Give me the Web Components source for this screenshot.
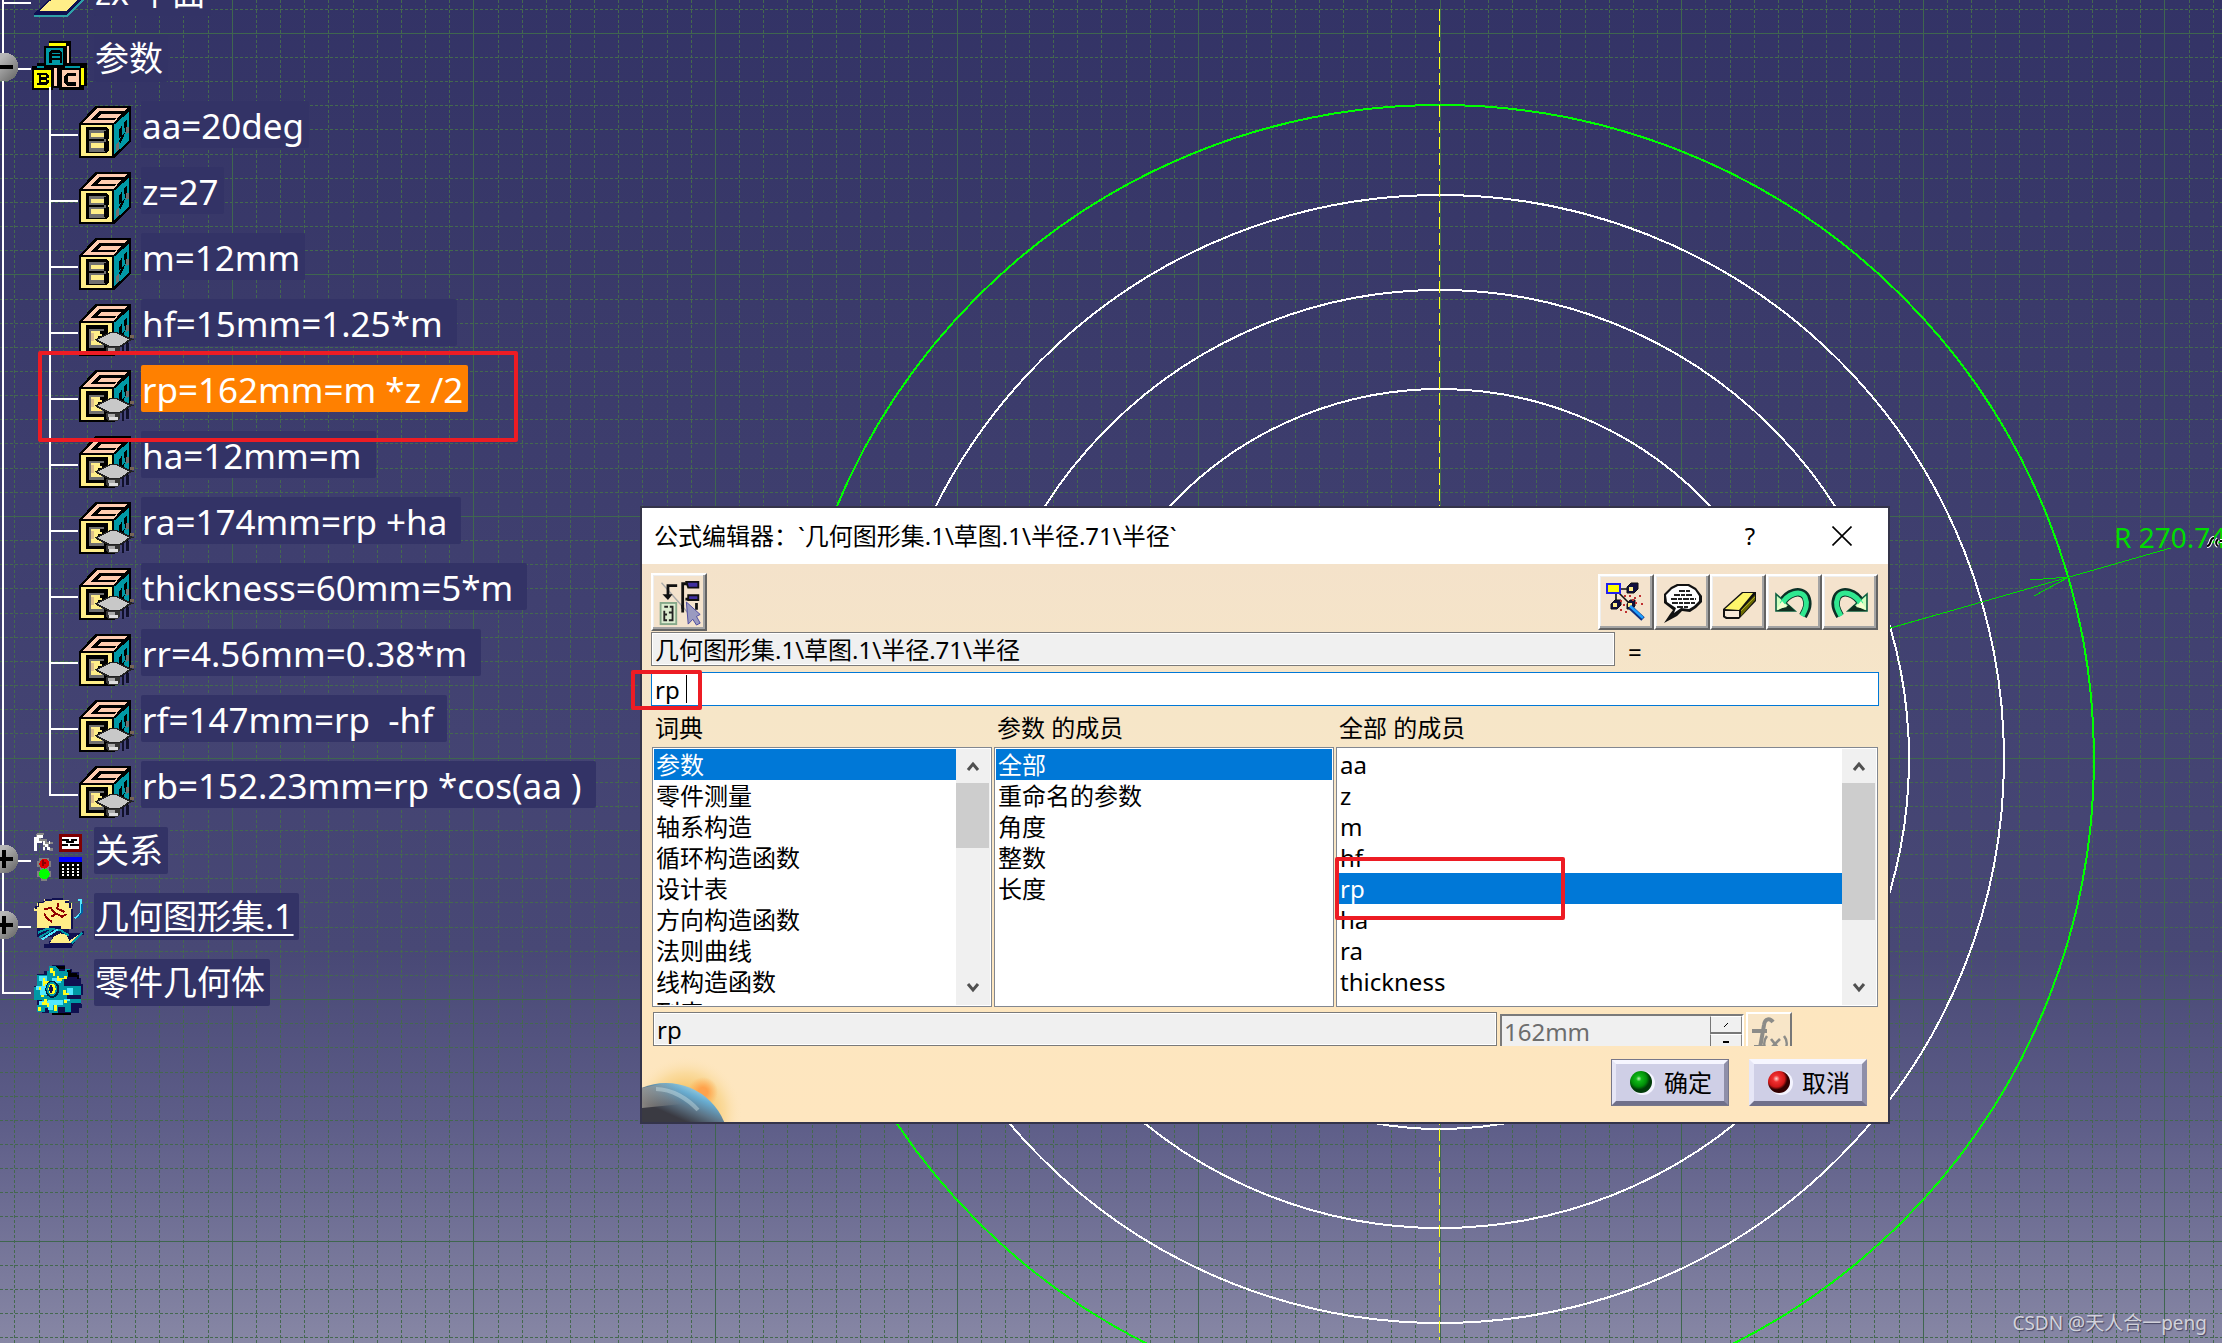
<!DOCTYPE html>
<html lang="zh-CN">
<head>
<meta charset="utf-8">
<title>公式编辑器</title>
<style>
html,body{margin:0;height:100%}
body{font-family:"Noto Sans","Noto Sans CJK SC",sans-serif;overflow:hidden}
</style>
</head>
<body>
<cad-workspace></cad-workspace>
<script>
const K='shape-rendering="crispEdges"';
const cubeShell=`
<path d="M0 52 50 0H156V106L106 156H0Z" fill="#000"/>
<path d="M12 50 54 6H144L104 50Z" fill="#ffccb0"/>
<path d="M34 43 62 15H136L128 24H70L60 36H112L104 43Z" fill="#000"/>
<path d="M66 24H124L112 36H56Z" fill="#ffccb0"/>
<path d="M106 56 149 18V106L106 144Z" fill="#0099a6"/>
<path d="M120 70 130 58V88L120 98ZM136 48 144 40V78H138V62L136 66Z" fill="#000"/>
<path d="M112 116 120 108V130L112 136ZM140 62H149V80L140 86Z" fill="#707070"/>
<path d="M120 104 132 84 138 82 124 112Z" fill="#000"/>
<path d="M6 58H98V149H6Z" fill="#ffee88"/>`;
const ICONS={
cube:`<svg viewBox="0 0 156 156" width="52" height="52" ${K}>${cubeShell}
<path d="M20 64H84L91 72V98L86 103 91 108V134L84 141H20Z" fill="#000"/>
<path d="M30 73H82V132L76 138H30Z" fill="#707070"/>
<path d="M30 99H76V105H30ZM75 74H80V98H75ZM75 108H80V134H75Z" fill="#000"/>
<path d="M36 80H74V94H36ZM36 110H74V126H36Z" fill="#ffee88"/></svg>`,
formula:`<svg viewBox="0 0 156 156" width="52" height="52" ${K} style="overflow:visible">${cubeShell}
<path d="M20 64H88V74H82V140H20Z" fill="#000"/>
<path d="M30 74H80V82H44V120H76V132H30Z" fill="#707070"/>
<path d="M36 82H62V90H70V124H36Z" fill="#ffee88"/><path d="M36 88H46V112H36Z" fill="#ddc08a"/>
<path d="M74 74H88V94H74ZM56 96H68V112H56ZM74 120H104V156H74Z" fill="#000"/>
<path d="M98 150H156V120H98Z" fill="#45457a"/>
<path d="M48 107 92 84H112L150 100 165 106 150 112 126 130H88L60 116Z" fill="#222"/>
<path d="M56 107 96 87H110L150 106 122 126H92Z" fill="#c8c8c8"/>
<path d="M80 128H124V146L116 154H90L80 146Z" fill="#333"/>
<path d="M86 132H108V142H86Z" fill="#aaa"/><path d="M90 142H116V150H90Z" fill="#dedede"/>
<path d="M130 124H136V154H128ZM142 118H150V148H142Z" fill="#10102a"/>
<path d="M154 94H164V102H154Z" fill="#776655"/></svg>`,
plane:`<svg viewBox="0 20 156 156" width="52" height="52" ${K} style="overflow:visible">
<path d="M6 139 60 90H158L110 139V145H6Z" fill="#101050"/><path d="M20 132 66 90H146L104 132Z" fill="#ffee88"/><path d="M6 142H106L156 92V98L108 148H6Z" fill="#2fa0a8"/></svg>`,
blocks:`<svg viewBox="0 -4 166 200" width="55" height="66" ${K}>
<path d="M50 0H119V66H165V134H157V148H82V140H64V148H0V76H14V66H36V14H50Z" fill="#000"/>
<path d="M52 5H104V13H52Z" fill="#ff0"/><path d="M43 21H94V73H43Z" fill="#0099a6"/>
<path d="M105 14H111V66H105Z" fill="#ffccb0"/>
<path d="M52 34 60 26H84L92 34V66H84V56H60V66H52Z" fill="#000"/><path d="M60 34H84V38H60ZM60 44H84V50H60Z" fill="#0099a6"/>
<path d="M6 88H58V140H6Z" fill="#ff0"/><path d="M16 96H44L50 102V110L44 114 50 118V126L44 132H16V126H22V102H16Z" fill="#000"/><path d="M28 102H42V108H28ZM28 118H42V124H28Z" fill="#ff0"/>
<path d="M66 82H74V136H66Z" fill="#ffccb0"/><path d="M92 88H142V138H92Z" fill="#ffccb0"/>
<path d="M134 96V104H108V124H134V134H106L98 126V104L106 96Z" fill="#000"/>
<path d="M148 80H156V132H148Z" fill="#ff0"/><path d="M14 75H36V80H14ZM100 75H146V80H100Z" fill="#0099a6"/>
<path d="M51 138H57V196H51Z" fill="#fff"/></svg>`,
relations:`<svg viewBox="0 0 156 156" width="52" height="52" ${K}>
<path d="M16 4H36V10H26V22H44V30H12V8ZM44 30H62V36H52V48H62V56H50V44H40V56H34V30Z" fill="#888"/>
<path d="M6 16H14V10H34V18H20V26H30V34H16V58H6ZM32 26H40V36H50V28H54V36H48V44H54V54H46V46H40V54H32V46H38V38H32Z" fill="#fff"/>
<path d="M81 5H150V60H81Z" fill="#800000"/><path d="M90 14H140V52H90Z" fill="#fff"/>
<path d="M90 20H112V28H90ZM118 20H136V28H118ZM90 36H108V42H90ZM114 36H140V42H114ZM102 26H126V32H102Z" fill="#000"/>
<path d="M22 78H50V88H58V104H50V116H58V134H46V148H28V134H16V116H24V104H16V88H22Z" fill="#808080"/>
<circle cx="37" cy="95" r="15" fill="#e00000"/><path d="M30 84H36V90H42V96H36V102H30Z" fill="#800"/><circle cx="37" cy="126" r="16" fill="#0f0"/>
<path d="M81 75H150V90H81Z" fill="#00f"/><path d="M81 90H150V141H81Z" fill="#000"/>
<path d="M94 97V138M109 97V138M124 97V138M139 97V138" stroke="#fff" stroke-width="6" stroke-dasharray="6 4"/></svg>`,
geoset:`<svg viewBox="0 0 156 156" width="52" height="52" ${K}>
<path d="M60 0H92V6H110V14H120V92H16V38H6V30H16V14H36V4H60Z" fill="#ffee88"/>
<path d="M60 0H92V6H60ZM32 8H60V4H40V12H18V24H10V34H16V26H22V14H32ZM110 10V16H116V34H124V92H118V30H112V16H100V8Z" fill="#101050"/>
<path d="M36 34 56 30 68 44 90 56 104 48M78 14 76 32 98 42M36 46 44 60 60 72M58 56 76 46" stroke="#900000" stroke-width="6" fill="none"/>
<path d="M16 90H50V84H88V94H110V106H150V98H156V110H142L120 146V150H36V138H50V128H60V118H16Z" fill="#101050"/>
<path d="M52 136 66 116 84 106 104 110 112 128 146 106 118 136Z" fill="#ffee88"/>
<path d="M18 104 46 92 84 96 110 112M22 118 60 96M120 136 150 104" stroke="#0099a6" stroke-width="6" fill="none"/>
<path d="M30 124 78 94M128 62 146 46V6H138" stroke="#50e8ff" stroke-width="6" fill="none"/><path d="M150 18V44L136 60" stroke="#0060a0" stroke-width="4" fill="none"/></svg>`,
body:`<svg viewBox="0 0 156 156" width="52" height="52" ${K}>
<path d="M60 4H100V16H120V24H140V42H146V60H152V94H148V120H150V132H140V148H118V154H60V146H30V130H14V100H6V66H16V30H36V20H54Z" fill="#101050"/>
<path d="M52 6H80V20H100V16H114V30H130V40H104V46H96V66H148V92H104V106H146V118H118V144H98V128H78V146H52V132H40V144H16V122H30V108H6V68H16V34H44V22H52Z" fill="#0099a6"/>
<path d="M22 36H44V52H60V42H88V56H74V64H44V92H24V78H12V66H30V50H22ZM62 108H92V122H62V138H48V124H22V110H44ZM104 72H122V92H104ZM96 104H114V112H96Z" fill="#50e8ff"/>
<path d="M54 12H62V22H70V36H62V28H54ZM32 42H40V52H54V60H40V66H32ZM20 70H28V78H20ZM28 92H36V100H28ZM74 36H82V42H96V36H106V46H90V52H74ZM92 78H102V86H112V94H92ZM36 104H44V118H52V130H44V122H30V114H36ZM66 124H74V142H66ZM96 108H106V116H96ZM18 128H26V142H18Z" fill="#ffff20"/>
<ellipse cx="61" cy="76" rx="21" ry="26" fill="#002040"/><ellipse cx="59" cy="75" rx="16" ry="21" fill="#0099a6"/><ellipse cx="60" cy="75" rx="11" ry="16" fill="#ff2"/><ellipse cx="57" cy="75" rx="5" ry="12" fill="#101050"/>
<path d="M70 6H100V14H80ZM106 18H116V26H136V34H142V44H134V38H108ZM112 148H118V154H60V148Z" fill="#000"/></svg>`,
pick:`<svg viewBox="0 0 50 50" width="46" height="48" preserveAspectRatio="none">
<path d="M6 5 40 42" stroke="#aaa" stroke-width="1.5"/><path d="M23 8H13V20" fill="none" stroke="#111" stroke-width="3"/><path d="M7 17H18L13 23Z" fill="#111"/>
<rect x="5" y="26" width="17" height="22" fill="#dcecd0" stroke="#86a98a" stroke-width="2"/><path d="M9 30H13M9 34V44H12M15 30H18V44H14M9 38H12M14 36H18" stroke="#222" stroke-width="2" fill="none"/>
<path d="M34 6H29V32M32 22H40" stroke="#111" stroke-width="3" fill="none"/><path d="M33 4H46V10H35ZM35 18H46V23H35Z" fill="#4030a0" stroke="#111" stroke-width="2"/><path d="M44 26V33M29 28V36" stroke="#111" stroke-width="3"/>
<path d="M33 25 48 38 44 40 48 47 44 49 40 43 35 48Z" fill="#9a9ac0" stroke="#4a48a0"/></svg>`,
wand:`<svg viewBox="0 0 48 48" width="48" height="48"><path d="M14 11H28M14 14V26M14 12 32 30" stroke="#111" stroke-width="1.6"/>
<rect x="5" y="6" width="13" height="9" fill="#ff0" stroke="#2020f0" stroke-width="2"/>
<g fill="#111040" stroke="#111"><path d="M25 9 29 5H36V11L32 15H25ZM9 26 13 22H19V27L15 31H9ZM25 26 28 22H33V28L30 31H25Z"/></g><g fill="#ffee88"><path d="M27 9H31V13H27ZM11 25H15V29H11ZM26 25H30V29H26Z"/></g>
<path d="M28 29 41 41" stroke="#103080" stroke-width="5"/><path d="M28 28 41 40" stroke="#20a0ff" stroke-width="2.4"/>
<path d="M22 18h2M27 18h2M32 20h2M37 18h2M18 23h2M33 25h2M39 26h2M18 32h2M23 34h2M30 22h2M21 27h2" stroke="#c03030" stroke-width="2"/></svg>`,
comment:`<svg viewBox="1 0 48 48" width="48" height="48"><path d="M7 16 14 9 20 6H32L39 10 45 18V24L39 30 33 34 25 33 20 38 7 45 13 36 16 32 7 25Z" fill="#111"/><path d="M9 17 15 11 21 8H31L38 12 42 18V23L37 28 32 31 24 30 17 35 19 30 10 24Z" fill="#fff"/>
<path d="M22 13H34M17 17H36M14 21H39M15 25H38M20 29H32" stroke="#222" stroke-width="2" stroke-dasharray="6 1 4 1"/></svg>`,
eraser:`<svg viewBox="2 0 48 48" width="48" height="48"><path d="M11 31 30 14H44V23L27 41H14L11 39Z" fill="#111"/><path d="M13 31 31 15H41L27 32Z" fill="#fdf56a"/><path d="M13 33H27V39H15L13 38Z" fill="#f6e8d8"/><path d="M29 32 43 17V22L29 38Z" fill="#6b6a00"/><path d="M29 33 43 19" stroke="#aaa620" stroke-width="1"/></svg>`,
undo:`<svg viewBox="1 0 48 48" width="48" height="48"><path d="M13 25C18 15 32 10 37 19 40 26 38 31 34 38" fill="none" stroke="#0b3026" stroke-width="8.4"/><path d="M7 16V33H26L7 16Z" fill="#cfffc0" stroke="#0b6040" stroke-width="1.6"/><path d="M7 33H26L20 27Z" fill="#103020"/><path d="M13 26C18 16 32 11 36 19 39 26 37 31 33 38" fill="none" stroke="#30e890" stroke-width="5"/><path d="M8 31 13 23 18 29Z" fill="#f4ffd0"/></svg>`,
redo:`<svg viewBox="1 0 48 48" width="48" height="48"><g transform="translate(49,0) scale(-1,1)"><path d="M13 25C18 15 32 10 37 19 40 26 38 31 34 38" fill="none" stroke="#0b3026" stroke-width="8.4"/><path d="M7 16V33H26L7 16Z" fill="#cfffc0" stroke="#0b6040" stroke-width="1.6"/><path d="M7 33H26L20 27Z" fill="#103020"/><path d="M13 26C18 16 32 11 36 19 39 26 37 31 33 38" fill="none" stroke="#30e890" stroke-width="5"/><path d="M8 31 13 23 18 29Z" fill="#f4ffd0"/></g></svg>`,
fx:`<svg viewBox="0 0 42 36" width="42" height="36" fill="none" stroke="#8c8c88"><path d="M25 8C22 4 17 4 16 11L12 34M4 17H19M6 33H17" stroke-width="4"/><path d="M19 22C15 27 16 33 19 37M36 22C40 27 39 33 36 37M23 25 31 35M32 25 22 35" stroke-width="2.6"/></svg>`,
green:`<svg viewBox="0 0 30 30" width="30" height="30"><defs><radialGradient id="a" cx=".4" cy=".35"><stop offset="0" stop-color="#b8f0b0"/><stop offset=".25" stop-color="#10b818"/><stop offset=".7" stop-color="#009008"/><stop offset="1" stop-color="#003c08"/></radialGradient></defs><circle cx="17" cy="15" r="12" fill="#f4f4ff"/><circle cx="15" cy="14" r="11" fill="url(#a)"/></svg>`,
red:`<svg viewBox="0 0 30 30" width="30" height="30"><defs><radialGradient id="a" cx=".38" cy=".35"><stop offset="0" stop-color="#ffd8d0"/><stop offset=".3" stop-color="#f03030"/><stop offset=".75" stop-color="#d01818"/><stop offset="1" stop-color="#300"/></radialGradient></defs><circle cx="17" cy="15" r="12" fill="#f4f4ff"/><circle cx="15" cy="14" r="11" fill="url(#a)"/></svg>`
};
const define=(name,html,setup)=>customElements.define(name,class extends HTMLElement{
  constructor(){super();this.attachShadow({mode:'open'});}
  connectedCallback(){this.shadowRoot.innerHTML=typeof html==='function'?html(this):html;if(setup)setup(this,this.shadowRoot);}
});

define('pixel-icon',el=>`<style>:host{display:block}svg{display:block}</style>${ICONS[el.getAttribute('name')]||''}`);

/* Sketcher grid, construction circles and radius dimension */
define('sketch-view',`<style>:host{display:block;width:100%;height:100%;background:linear-gradient(#333366 0,#3a3a6a 300px,#404070 600px,#484875 950px,#5d5d88 1120px,#8787a5 1343px)}svg{display:block}text{font-size:28px}</style>
<svg width="100%" height="100%"></svg>`,(el,root)=>{
  const W=Math.max(innerWidth,1),H=Math.max(innerHeight,1),step=241.57,ox=232.3,oy=33.3;
  let major='',minor='';
  for(let i=-10;i<W/24;i++){const x=Math.floor(ox+i*step/10)+.5,d=`M${x} 0V${H}`;i%10?minor+=d:major+=d;}
  for(let i=-2;i<H/24;i++){const y=Math.floor(oy+i*step/10)+.5,d=`M0 ${y}H${W}`;i%10?minor+=d:major+=d;}
  root.querySelector('svg').innerHTML=`
  <g fill="none" ${K}><path d="${minor}" stroke="#44684f" stroke-dasharray="3 2"/><path d="${major}" stroke="#3f664f"/>
  <g stroke="#fff" stroke-width="2"><circle cx="1440" cy="759" r="370"/><circle cx="1440" cy="759" r="469"/><circle cx="1440" cy="759" r="564"/></g>
  <circle cx="1440" cy="759" r="654" stroke="#0f0" stroke-width="2"/>
  <path d="M1439.5 9V1340" stroke="#ffff20" stroke-dasharray="12 4"/>
  <path d="M1880 631 2171 548M2069 577 2030 580M2069 577 2034 596" stroke="#00dc00"/></g>
  <text x="2114" y="548" fill="#00dc00">R 270.74</text>
  <path d="M2207 546C2212 546 2209 538 2214 538M2218 539C2215 542 2216 545 2218 546M2220 541H2222" fill="none" stroke="#fff" stroke-width="4"/>
  <path d="M2207 546C2212 546 2209 538 2214 538M2218 539C2215 542 2216 545 2218 546M2220 541H2222" stroke="#000" fill="none" stroke-width="2"/>`;
});

/* One row of the specification tree */
define('tree-node',el=>{
  const knob=el.getAttribute('knob');
  return `<style>
  :host{display:block;--end:100%}:host([last]){--end:34px}
  .row{display:flex;align-items:flex-start;height:66px}
  .gutter{flex:none;width:32px;height:66px;background:linear-gradient(#fff,#fff) 2px 0/2px var(--end) no-repeat,linear-gradient(#fff,#fff) 2px 33px/29px 2px no-repeat}
  :host([sub]) .gutter{width:30px;background-position:0 0,0 33px}
  .gutter svg{display:block;margin:17px 0 0 -11px}
  .icon{flex:none;width:62px;padding-top:5px}
  .label{box-sizing:border-box;height:47px;padding:0 5px 0 1px;border-radius:2px;background:#333366;color:#fff;font-size:34px;line-height:46px;white-space:pre}
  :host([sub]) .label{font-size:35px;line-height:49px}
  :host([selected]) .label{background:#ff8000}
  :host([underline]) .label{text-decoration:underline;text-decoration-thickness:2px;text-underline-offset:5px}
  .kids{padding-left:49px;background:linear-gradient(#fff,#fff) 2px 0/2px 100% no-repeat}
  </style>
  <div class="row"><span class="gutter">${knob?`<svg width="30" height="30" viewBox="0 0 30 30" ${K}><defs><linearGradient id="k" x1="0" y1="0" x2="1" y2="1"><stop offset=".3" stop-color="#b8b8b8"/><stop offset="1" stop-color="#606060"/></linearGradient></defs><circle cx="15" cy="15" r="14.500" fill="url(#k)"/><path d="M5 13H24V17H5Z${knob==='plus'?'M13 6H17V24H13Z':''}" fill="#000"/></svg>`:''}</span>
  <span class="icon"><pixel-icon name="${el.getAttribute('icon')}"></pixel-icon></span><span class="label">${el.getAttribute('label')}</span></div>
  <div class="kids"><slot></slot></div>`;});

define('spec-tree',()=>{
  const p=[['cube','aa=20deg'],['cube','z=27'],['cube','m=12mm'],['formula','hf=15mm=1.25*m '],['formula','rp=162mm=m *z /2'],['formula','ha=12mm=m '],['formula','ra=174mm=rp +ha '],['formula','thickness=60mm=5*m '],['formula','rr=4.56mm=0.38*m '],['formula','rf=147mm=rp  -hf '],['formula','rb=152.23mm=rp *cos(aa ) ']];
  return `<style>:host{display:block;overflow:hidden}nav{margin-top:-31px}</style><nav>
  <tree-node icon="plane" label="zx 平面"></tree-node>
  <tree-node icon="blocks" label="参数" knob="minus">${p.map((r,i)=>`<tree-node sub icon="${r[0]}" label="${r[1]}"${i===4?' selected':''}${i===10?' last':''}></tree-node>`).join('')}</tree-node>
  <tree-node icon="relations" label="关系" knob="plus"></tree-node>
  <tree-node icon="geoset" label="几何图形集.1" knob="plus" underline></tree-node>
  <tree-node icon="body" label="零件几何体" last></tree-node></nav>`;});

define('tool-button',el=>`<style>:host{display:block}button{display:flex;align-items:center;justify-content:center;box-sizing:border-box;width:56px;height:56px;padding:0;margin:0;border:2px solid;border-color:#fff #636363 #636363 #fff;background:#f4e3cd;box-shadow:inset -2px -2px #a3a3a3,inset 1px 1px #eee}
:host([tall]) button{height:58px}</style><button aria-label="${el.getAttribute('label')}"><pixel-icon name="${el.getAttribute('icon')}"></pixel-icon></button>`);

define('push-button',el=>`<style>:host{display:block}button{display:flex;align-items:center;gap:8px;box-sizing:border-box;width:118px;height:47px;border:5px solid;border-color:#f6f6ff #8f8fa8 #70708a #e6e6f6;background:#cfcfe6;font:24px "Noto Sans","Noto Sans CJK SC",sans-serif;line-height:36px;color:#000;padding:0 0 0 10px;white-space:nowrap}
:host([primary]) button{outline:1px solid #77778a;outline-offset:-1px}</style><button><pixel-icon name="${el.getAttribute('icon')}"></pixel-icon><slot></slot></button>`);

define('text-field',el=>`<style>:host{display:flex;position:relative;box-sizing:border-box;height:34px;border:1px solid #7a7a7a;background:#fff;padding:1px}
input{flex:1;min-width:0;box-sizing:border-box;border:0;outline:0;margin:0;padding:2px 2px 0;background:#f0f0f0;font:24px "Noto Sans","Noto Sans CJK SC",sans-serif;line-height:30px;color:#000}
:host([active]){border-color:#0078d7}:host([active]) input{background:#fff}
i{display:none;position:absolute;left:34px;top:2px;width:1px;height:28px;background:#000}:host([active]) i{display:block}</style>
<input aria-label="${el.getAttribute('label')}" value="${el.getAttribute('value')}" ${el.hasAttribute('active')?'':'readonly'}><i></i>`);

define('list-pane',el=>{
  const items=el.getAttribute('items').split('|'),sel=+el.getAttribute('sel'),th=el.getAttribute('thumb');
  return `<style>:host{display:flex;flex-direction:column;min-width:0}
  h3{margin:0;padding-left:3px;height:40px;line-height:42px;font-size:24px;font-weight:400}
  .box{display:flex;height:260px;box-sizing:border-box;border:1px solid #828790;padding:1px;background:#fff;overflow:hidden}
  ul{flex:1;min-width:0;margin:0;padding:0;list-style:none;overflow:hidden}
  li{height:31px;line-height:32px;padding-left:2px;font-size:24px;white-space:nowrap}
  li[aria-selected=true]{background:#0078d7;color:#fff}
  .bar{display:flex;flex-direction:column;flex:none;width:34px;background:#f0f0f0}
  .track{flex:1}.thumb{height:${th}px;margin-right:1px;background:#cdcdcd}
  button{border:0;padding:0;background:none;height:34px;display:flex;align-items:center;justify-content:center}
  </style><h3 id="t">${el.getAttribute('heading')}</h3><div class="box"><ul role="listbox" aria-labelledby="t">${items.map((t,i)=>`<li role="option" aria-selected="${i===sel}">${t}</li>`).join('')}</ul>
  ${th?`<div class="bar"><button aria-label="向上"><svg width="14" height="14" viewBox="0 0 14 14"><path d="M2 11 7 5 12 11" fill="none" stroke="#505050" stroke-width="3"/></svg></button><div class="track"><div class="thumb"></div></div><button aria-label="向下"><svg width="14" height="14" viewBox="0 0 14 14"><path d="M2 3 7 9 12 3" fill="none" stroke="#505050" stroke-width="3"/></svg></button></div>`:''}</div>`;});

define('formula-dialog',`<style>
:host{display:flex;flex-direction:column;box-sizing:border-box;border:2px solid #34344a;background:#fff;color:#000;font-size:24px}
header{display:flex;align-items:center;height:56px;padding-left:12px}
h2{flex:1;margin:0;padding-bottom:4px;font-size:24px;font-weight:400;white-space:nowrap}
header button{width:92px;height:54px;border:0;padding:0;background:none;font:24px "Noto Sans",sans-serif;line-height:54px;color:#000;display:flex;align-items:center;justify-content:center}
main{position:relative;display:flex;flex-direction:column;height:558px;box-sizing:border-box;padding:9px 9px 0;background:linear-gradient(#f4e2ca 0,#f6e6c8 150px,#f7e6c8 200px,#fde6bf 440px,#fee6bf)}
.tools{display:flex;height:59px}.tools span{flex:1}.tools .set{display:flex;flex:none;padding:1px 1px 0 0}
.target{display:flex;align-items:center;gap:13px}.target text-field{flex:1}.target span{width:251px;line-height:40px;height:34px}
.expr{margin-top:6px}
.lists{display:grid;grid-template-columns:340px 340px 1fr;gap:2px;padding:1px 1px 0;margin-bottom:5px}
.result{display:flex;height:34px;overflow:hidden;padding-left:2px}
.result text-field{width:844px}
.spin{display:flex;box-sizing:border-box;width:244px;height:40px;margin:2px 0 0 3px;border:2px solid;border-color:#7a7a7a #fff #fff #7a7a7a;background:#f0f0f0}
.spin input{flex:1;min-width:0;height:32px;box-sizing:border-box;border:0;padding:0 2px;background:none;font:24px "Noto Sans",sans-serif;line-height:32px;color:#6d6d6d}
.steps{display:flex;flex-direction:column;width:32px}.steps button{height:18px;box-sizing:border-box;padding:0;border:1px solid;border-color:#fff #888 #777 #777;background:#f0f0f0;display:flex;align-items:center;justify-content:center;border-bottom-width:2px}
.fx{box-sizing:border-box;width:46px;height:40px;margin-left:2px;padding:0;border:2px solid;border-color:#fff #777 #777 #fff;background:#f8e6c8;flex:none;display:flex}
footer{display:flex;justify-content:flex-end;gap:20px;padding:13px 12px 0 0}
.globe{position:absolute;left:0;bottom:0}
</style>
<header><h2>公式编辑器：\`几何图形集.1\\草图.1\\半径.71\\半径\`</h2><button aria-label="帮助">?</button><button aria-label="关闭"><svg width="20" height="20" viewBox="0 0 20 20"><path d="M.5.5 19.500 19.500M19.500.5.5 19.500" stroke="#000" stroke-width="1.6"/></svg></button></header>
<main>
<svg class="globe" width="110" height="80" viewBox="0 0 110 80"><defs><radialGradient id="g" cx="44" cy="70" r="56" gradientUnits="userSpaceOnUse"><stop offset=".4" stop-color="#f6c468"/><stop offset=".7" stop-color="#f9d690" stop-opacity=".7"/><stop offset="1" stop-color="#fde6bf" stop-opacity="0"/></radialGradient><radialGradient id="o" cx="61" cy="50" r="15" gradientUnits="userSpaceOnUse"><stop offset=".3" stop-color="#ffa24c"/><stop offset="1" stop-color="#ffac50" stop-opacity="0"/></radialGradient><linearGradient id="p" x1="52" y1="40" x2="34" y2="80" gradientUnits="userSpaceOnUse"><stop offset="0" stop-color="#b4dde6"/><stop offset=".3" stop-color="#68acd0"/><stop offset=".6" stop-color="#5d7486"/><stop offset=".9" stop-color="#3a3a42"/></linearGradient><linearGradient id="q" x1="0" y1="0" x2="40" y2="0" gradientUnits="userSpaceOnUse"><stop offset="0" stop-color="#a8a49c" stop-opacity=".7"/><stop offset="1" stop-color="#a8a49c" stop-opacity="0"/></linearGradient></defs>
<rect width="110" height="80" fill="url(#g)"/><rect width="110" height="80" fill="url(#o)"/><circle cx="24" cy="104" r="63" fill="url(#p)"/><path d="M0 46 24 41 40 44V62L0 66Z" fill="url(#q)"/><path d="M14 47C30 47 46 57 56 68" stroke="#d4e8ea" stroke-opacity=".4" stroke-width="4" fill="none"/></svg>
<div class="tools"><tool-button tall icon="pick" label="增量"></tool-button><span></span><div class="set"><tool-button icon="wand" label="向导"></tool-button><tool-button icon="comment" label="注释"></tool-button><tool-button icon="eraser" label="清除"></tool-button><tool-button icon="undo" label="撤销"></tool-button><tool-button icon="redo" label="重做"></tool-button></div></div>
<div class="target"><text-field label="目标参数" value="几何图形集.1\\草图.1\\半径.71\\半径"></text-field><span>=</span></div>
<text-field class="expr" active label="公式" value="rp "></text-field>
<div class="lists"><list-pane heading="词典" sel="0" thumb="65" items="参数|零件测量|轴系构造|循环构造函数|设计表|方向构造函数|法则曲线|线构造函数|列表"></list-pane>
<list-pane heading="参数 的成员" sel="0" items="全部|重命名的参数|角度|整数|长度"></list-pane>
<list-pane heading="全部 的成员" sel="4" thumb="137" items="aa|z|m|hf|rp|ha|ra|thickness"></list-pane></div>
<div class="result"><text-field label="所选参数" value="rp"></text-field><div class="spin"><input aria-label="数值" value="162mm" disabled><div class="steps"><button aria-label="增加"><svg width="8" height="6"><path d="M2 5 6 1" stroke="#000"/></svg></button><button aria-label="减少"><svg width="8" height="6"><path d="M1 2H7" stroke="#000" stroke-width="2"/></svg></button></div></div><button class="fx" aria-label="f(x)" disabled><pixel-icon name="fx"></pixel-icon></button></div>
<footer><push-button primary icon="green">确定</push-button><push-button icon="red">取消</push-button></footer>
</main>`);

define('mark-box',`<style>:host{display:block;position:absolute;box-sizing:border-box;border:4px solid #ed1c24;border-radius:2px}</style>`);

define('cad-workspace',`<style>
:host{display:block;position:relative;width:100%;height:100vh;overflow:hidden}
sketch-view,spec-tree{position:absolute;left:0;top:0}
formula-dialog{position:absolute;left:640px;top:506px;width:1250px}
.tree{left:38px;top:351px;width:480px;height:91px}
.expr{left:631px;top:670px;width:71px;height:40px}
.item{left:1335px;top:857px;width:230px;height:63px}
small{position:absolute;right:15px;bottom:6px;font-size:19px;line-height:28px;color:#d2d2da;text-shadow:1px 1px 1px #444460;white-space:nowrap}
</style>
<sketch-view></sketch-view><spec-tree></spec-tree><formula-dialog></formula-dialog>
<mark-box class="tree"></mark-box><mark-box class="expr"></mark-box><mark-box class="item"></mark-box>
<small>CSDN @天人合一peng</small>`);
</script>
</body>
</html>
